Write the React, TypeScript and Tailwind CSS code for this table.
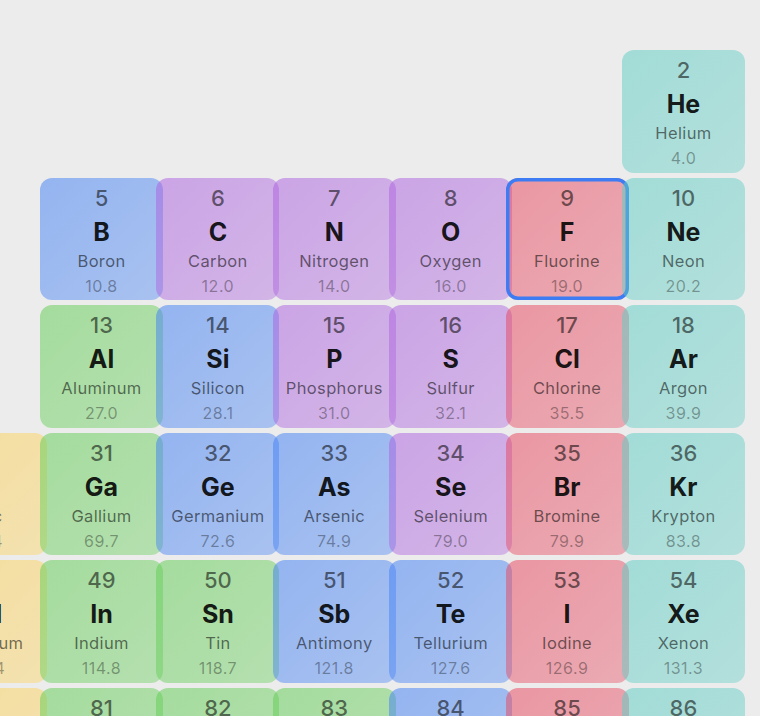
type Kind = "blue" | "purple" | "red" | "teal" | "green" | "yellow";

type Element = {
  col: number;
  row: number;
  num: number;
  sym: string;
  name: string;
  wt: string;
  kind: Kind;
  selected?: boolean;
};

const kindClass: Record<Kind, string> = {
  blue: "bg-linear-to-br from-[rgba(67,129,245,0.52)] to-[rgba(67,129,245,0.4)]",
  purple: "bg-linear-to-br from-[rgba(172,98,223,0.52)] to-[rgba(172,98,223,0.4)]",
  red: "bg-linear-to-br from-[rgba(232,72,94,0.52)] to-[rgba(232,72,94,0.4)]",
  teal: "bg-linear-to-br from-[rgba(94,205,196,0.52)] to-[rgba(94,205,196,0.4)]",
  green: "bg-linear-to-br from-[rgba(98,205,85,0.52)] to-[rgba(98,205,85,0.4)]",
  yellow: "bg-linear-to-br from-[rgba(253,209,85,0.52)] to-[rgba(253,209,85,0.4)]",
};

const elements: Element[] = [
  { col: 6, row: 1, num: 2, sym: "He", name: "Helium", wt: "4.0", kind: "teal" },

  { col: 1, row: 2, num: 5, sym: "B", name: "Boron", wt: "10.8", kind: "blue" },
  { col: 2, row: 2, num: 6, sym: "C", name: "Carbon", wt: "12.0", kind: "purple" },
  { col: 3, row: 2, num: 7, sym: "N", name: "Nitrogen", wt: "14.0", kind: "purple" },
  { col: 4, row: 2, num: 8, sym: "O", name: "Oxygen", wt: "16.0", kind: "purple" },
  { col: 5, row: 2, num: 9, sym: "F", name: "Fluorine", wt: "19.0", kind: "red", selected: true },
  { col: 6, row: 2, num: 10, sym: "Ne", name: "Neon", wt: "20.2", kind: "teal" },

  { col: 1, row: 3, num: 13, sym: "Al", name: "Aluminum", wt: "27.0", kind: "green" },
  { col: 2, row: 3, num: 14, sym: "Si", name: "Silicon", wt: "28.1", kind: "blue" },
  { col: 3, row: 3, num: 15, sym: "P", name: "Phosphorus", wt: "31.0", kind: "purple" },
  { col: 4, row: 3, num: 16, sym: "S", name: "Sulfur", wt: "32.1", kind: "purple" },
  { col: 5, row: 3, num: 17, sym: "Cl", name: "Chlorine", wt: "35.5", kind: "red" },
  { col: 6, row: 3, num: 18, sym: "Ar", name: "Argon", wt: "39.9", kind: "teal" },

  { col: 0, row: 4, num: 30, sym: "Zn", name: "Zinc", wt: "65.4", kind: "yellow" },
  { col: 1, row: 4, num: 31, sym: "Ga", name: "Gallium", wt: "69.7", kind: "green" },
  { col: 2, row: 4, num: 32, sym: "Ge", name: "Germanium", wt: "72.6", kind: "blue" },
  { col: 3, row: 4, num: 33, sym: "As", name: "Arsenic", wt: "74.9", kind: "blue" },
  { col: 4, row: 4, num: 34, sym: "Se", name: "Selenium", wt: "79.0", kind: "purple" },
  { col: 5, row: 4, num: 35, sym: "Br", name: "Bromine", wt: "79.9", kind: "red" },
  { col: 6, row: 4, num: 36, sym: "Kr", name: "Krypton", wt: "83.8", kind: "teal" },

  { col: 0, row: 5, num: 48, sym: "Cd", name: "Cadmium", wt: "112.4", kind: "yellow" },
  { col: 1, row: 5, num: 49, sym: "In", name: "Indium", wt: "114.8", kind: "green" },
  { col: 2, row: 5, num: 50, sym: "Sn", name: "Tin", wt: "118.7", kind: "green" },
  { col: 3, row: 5, num: 51, sym: "Sb", name: "Antimony", wt: "121.8", kind: "blue" },
  { col: 4, row: 5, num: 52, sym: "Te", name: "Tellurium", wt: "127.6", kind: "blue" },
  { col: 5, row: 5, num: 53, sym: "I", name: "Iodine", wt: "126.9", kind: "red" },
  { col: 6, row: 5, num: 54, sym: "Xe", name: "Xenon", wt: "131.3", kind: "teal" },

  { col: 0, row: 6, num: 80, sym: "Hg", name: "Mercury", wt: "200.6", kind: "yellow" },
  { col: 1, row: 6, num: 81, sym: "Tl", name: "Thallium", wt: "204.4", kind: "green" },
  { col: 2, row: 6, num: 82, sym: "Pb", name: "Lead", wt: "207.2", kind: "green" },
  { col: 3, row: 6, num: 83, sym: "Bi", name: "Bismuth", wt: "209.0", kind: "green" },
  { col: 4, row: 6, num: 84, sym: "Po", name: "Polonium", wt: "209", kind: "blue" },
  { col: 5, row: 6, num: 85, sym: "At", name: "Astatine", wt: "210", kind: "red" },
  { col: 6, row: 6, num: 86, sym: "Rn", name: "Radon", wt: "222", kind: "teal" },
];

function Cell({ el }: { el: Element }) {
  return (
    <div
      style={{ gridColumn: el.col + 1, gridRow: el.row }}
      className={`w-[123px] h-[122.6px] rounded-[12px] flex flex-col items-center pt-[8px] whitespace-nowrap ${kindClass[el.kind]} ${
        el.selected ? "ring-[3.5px] ring-inset ring-[#3d7cf2]" : ""
      }`}
    >
      <div className="text-[22px] leading-[24px] font-medium text-black/55">{el.num}</div>
      <div className="mt-[6px] text-[25px] leading-[32px] font-bold text-black/90">{el.sym}</div>
      <div className="mt-[2px] text-[16.5px] leading-[22px] tracking-[0.35px] text-black/55">{el.name}</div>
      <div className="mt-[4px] text-[16px] leading-[20px] tracking-[0.5px] text-black/35">{el.wt}</div>
    </div>
  );
}

export default function App() {
  return (
    <div className="w-[760px] h-[716px] overflow-hidden bg-[#ececec] font-['Inter','Noto_Sans',sans-serif]">
      <div className="ml-[-76.4px] pt-[50px] grid grid-cols-[repeat(7,116.4px)] auto-rows-[122.6px] gap-y-[5px]">
        {elements.map((el) => (
          <Cell key={el.num} el={el} />
        ))}
      </div>
    </div>
  );
}
